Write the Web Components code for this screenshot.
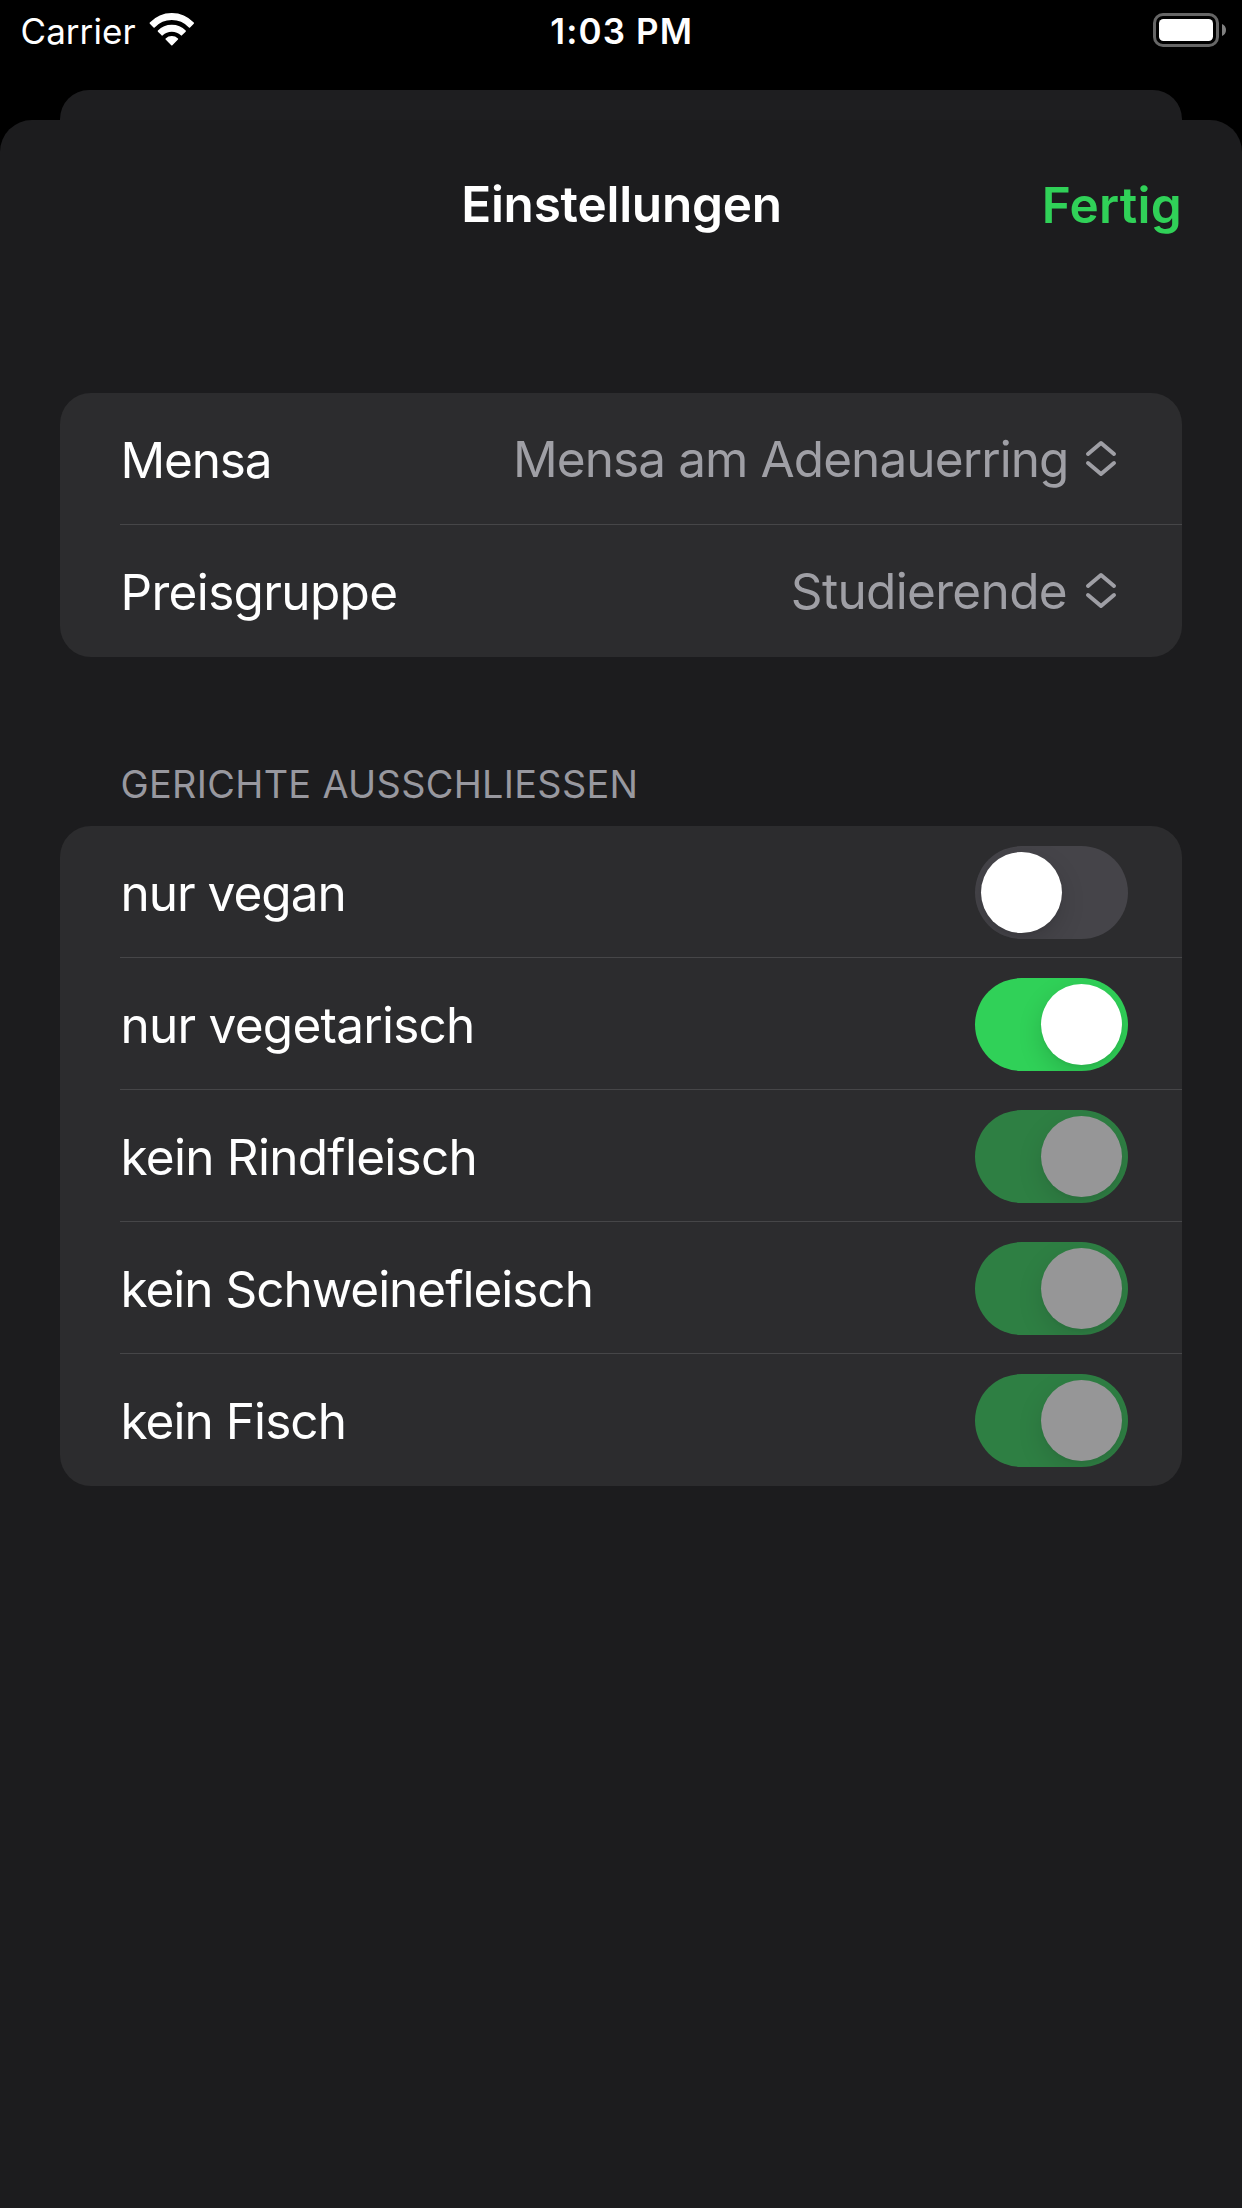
<!DOCTYPE html>
<html lang="de">
<head>
<meta charset="utf-8">
<title>Einstellungen</title>
<style>
html, body { margin: 0; background: #000; }
body { font-family: Inter, "Liberation Sans", sans-serif; color: #fff; }
</style>
</head>
<body>
<settings-screen>
  <status-bar slot="status" carrier="Carrier" time="1:03 PM"></status-bar>
  <sheet-header heading="Einstellungen" action="Fertig"></sheet-header>
  <settings-group style="--gap: 105px">
    <settings-row label="Mensa" style="--track: -1.15px"><menu-value style="--track: -0.91px; --end: 15.5px">Mensa am Adenauerring</menu-value></settings-row>
    <settings-row label="Preisgruppe" style="--track: -0.66px"><menu-value style="--track: -0.66px; --end: 17px">Studierende</menu-value></settings-row>
  </settings-group>
  <settings-group heading="GERICHTE AUSSCHLIESSEN" style="--gap: 104px">
    <settings-row label="nur vegan" style="--track: -0.99px"><toggle-switch></toggle-switch></settings-row>
    <settings-row label="nur vegetarisch" style="--track: -0.75px"><toggle-switch on></toggle-switch></settings-row>
    <settings-row label="kein Rindfleisch" style="--track: -0.74px"><toggle-switch on disabled></toggle-switch></settings-row>
    <settings-row label="kein Schweinefleisch" style="--track: -1.02px"><toggle-switch on disabled></toggle-switch></settings-row>
    <settings-row label="kein Fisch" style="--track: -0.95px"><toggle-switch on disabled></toggle-switch></settings-row>
  </settings-group>
</settings-screen>

<script>
const define = (name, render) => customElements.define(name, class extends HTMLElement {
  constructor() {
    super();
    this.attachShadow({ mode: 'open' });
  }
  connectedCallback() {
    this.shadowRoot.innerHTML = render(this);
  }
});

define('settings-screen', () => `
  <style>
    :host { display: flex; flex-direction: column; width: 1242px; height: 2208px; background: #000; overflow: hidden; }
    .behind { height: 30px; margin: 28px 60px 0; border-radius: 29px 29px 0 0; background: #1e1e20; }
    .sheet { flex: 1; display: flex; flex-direction: column; background: #1c1c1e; border-radius: 32px 32px 0 0; }
  </style>
  <slot name="status"></slot>
  <div class="behind"></div>
  <div class="sheet"><slot></slot></div>`);

define('status-bar', el => `
  <style>
    :host { display: grid; grid-template-columns: 1fr auto 1fr; align-items: center; height: 62px; padding: 0 15px 0 20.5px; font-size: 35px; line-height: 62px; }
    .left { display: flex; align-items: center; gap: 12.5px; }
    .left span { letter-spacing: 0.06px; }
    .time { font-weight: 560; letter-spacing: 1.15px; padding-right: 4px; }
    .right { display: flex; justify-content: flex-end; }
    svg { display: block; }
  </style>
  <div class="left">
    <span>${el.getAttribute('carrier')}</span>
    <svg width="48" height="36" viewBox="0 0 48 36" fill="#fff" stroke="#fff" stroke-linejoin="round" style="margin-top:-3px">
      <path stroke-width="1.6" d="M2.4 11.1C14.1-1.4 33.5-1.4 45.2 11.1L41.5 14.9C31.7 4.7 15.9 4.7 6.1 14.9Z"/>
      <path stroke-width="1.6" d="M10.5 19.1C17.6 11.6 30 11.6 37.1 19.1L33.4 22.8C28.3 17.5 19.3 17.5 14.2 22.8Z"/>
      <path stroke-width="1.6" d="M18.2 27C21.3 24 26.3 24 29.4 27L23.8 32.7Z"/>
    </svg>
  </div>
  <span class="time">${el.getAttribute('time')}</span>
  <div class="right">
    <svg width="74" height="36" viewBox="0 0 74 36" style="margin-top:-2px">
      <rect x="1.5" y="2.5" width="63" height="31" rx="8.5" fill="none" stroke="#666" stroke-width="3"/>
      <rect x="6" y="7" width="54" height="22" rx="4.5" fill="#fff"/>
      <path d="M69 12C71.500 13 73 15.300 73 18C73 20.700 71.500 23 69 24Z" fill="#808080"/>
    </svg>
  </div>`);

define('sheet-header', el => `
  <style>
    :host { display: grid; grid-template-columns: 1fr auto 1fr; align-items: center; height: 168px; padding: 0 60px; font-size: 49.5px; font-weight: 600; line-height: 60px; }
    .title { grid-column: 2; letter-spacing: -0.23px; padding-left: 1px; }
    .action { justify-self: end; color: #30d158; letter-spacing: 0.25px; padding-top: 2px; }
  </style>
  <span class="title">${el.getAttribute('heading')}</span>
  <span class="action">${el.getAttribute('action')}</span>`);

define('settings-group', el => `
  <style>
    :host { display: block; margin: var(--gap) 60px 0; }
    header { height: 65px; padding-left: 60.5px; font-size: 37.8px; line-height: 46px; letter-spacing: 0.34px; color: #98989f; }
    .card { border-radius: 31px; background: #2c2c2e; overflow: hidden; }
  </style>
  ${el.hasAttribute('heading') ? `<header>${el.getAttribute('heading')}</header>` : ''}
  <div class="card"><slot></slot></div>`);

define('settings-row', el => `
  <style>
    :host { display: flex; box-sizing: border-box; height: 132px; margin-left: 60px; padding-right: 54px; align-items: center; justify-content: space-between; border-bottom: 1px solid #464648; }
    :host(:last-of-type) { border-bottom-color: transparent; }
    .label { font-size: 49.5px; line-height: 60px; letter-spacing: var(--track); padding: 3px 0 0 0.5px; white-space: nowrap; }
  </style>
  <span class="label">${el.getAttribute('label')}</span>
  <slot></slot>`);

define('menu-value', () => `
  <style>
    :host { display: flex; align-items: center; gap: var(--end); padding-right: 10px; color: #9f9fa5; font-size: 49.5px; line-height: 60px; letter-spacing: var(--track); white-space: nowrap; }
    svg { display: block; margin-top: -2px; }
  </style>
  <span><slot></slot></span>
  <svg width="34" height="38" viewBox="0 0 34 38" fill="none" stroke="currentColor" stroke-width="4" stroke-linecap="round" stroke-linejoin="round">
    <path d="M4 15L17 4L30 15M4 24L17 35L30 24"/>
  </svg>`);

define('toggle-switch', () => `
  <style>
    :host { display: flex; box-sizing: border-box; width: 153px; height: 93px; padding: 6px; border-radius: 47px; background: #454449; overflow: hidden; margin-top: 2px; }
    :host([on]) { justify-content: flex-end; background: #30d158; }
    :host([disabled]) { opacity: 0.5; }
    i { width: 81px; height: 81px; border-radius: 50%; background: #fff; box-shadow: 0 9px 24px rgba(0, 0, 0, 0.15), 0 2px 3px rgba(0, 0, 0, 0.04); }
  </style>
  <i></i>`);
</script>
</body>
</html>
